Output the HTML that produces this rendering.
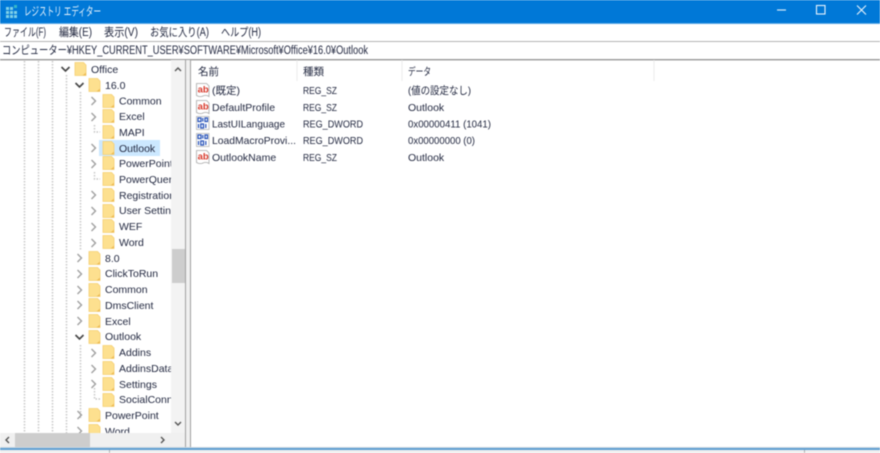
<!DOCTYPE html>
<html lang="ja"><head><meta charset="utf-8"><title>レジストリ エディター</title>
<style>
html,body{margin:0;padding:0;background:#fff;width:880px;height:453px;overflow:hidden}
svg{display:block;filter:blur(.4px)}
text{font-family:"Liberation Sans","Noto Sans CJK JP",sans-serif;font-size:10.5px;fill:#222840}
.m{font-size:11.5px}
.f{fill:#fde08f;stroke:#f5cf72;stroke-width:.8}
.c{fill:none;stroke:#a0a0a0;stroke-width:1.4}
.d{fill:none;stroke:#444;stroke-width:1.6}
.l{stroke:#c4c4c4;stroke-width:1.4;stroke-dasharray:1.5 1.5;fill:none}
</style></head><body>
<svg width="880" height="453" viewBox="0 0 880 453" xmlns="http://www.w3.org/2000/svg">
<defs>
<clipPath id="t"><rect x="0" y="60" width="171" height="373"/></clipPath>
<g id="fo"><path class="f" d="M.5 .5H9L11.5 3V13.5H.5Z"/><path d="M8 13.5L11.5 10.5V13.5Z" fill="#eebd55"/></g>
<g id="cr"><path class="c" d="M0 0L4 4L0 8"/></g>
<g id="ce"><path class="d" d="M0 0L4 4L8 0"/></g>
<g id="ab"><path d="M.5 .5H10.5L13 3V13.5Q10 11.500 7 13Q4 14.500 .5 12.500Z" fill="#fff" stroke="#a8a8a8" stroke-width=".8"/><text x="1.6" y="9.500" style="font-size:9.5px;font-weight:bold;fill:#d8392b">ab</text></g>
<g id="bn"><rect x=".5" y=".5" width="12.500" height="13" fill="#fff" stroke="#b4b4b4" stroke-width=".8"/><path d="M2 2H5V5.500H2ZM6.800 2V5.500M9 2H11.500V5.500H9ZM2.500 8V12M4.800 8H7.500V12H4.800ZM9.800 8V12" fill="none" stroke="#2450b8" stroke-width="1.2"/></g>
</defs>

<rect width="880" height="453" fill="#fff"/>
<!-- title bar -->
<rect width="880" height="23" fill="#0078d7"/>
<rect y="23" width="880" height="1" fill="#5aa8e6"/>
<g fill="#7fd0e8"><rect x="6" y="7" width="3" height="3"/><rect x="10" y="7" width="3" height="3"/><rect x="6" y="11" width="3" height="3"/><rect x="10" y="11" width="3" height="3"/><rect x="14" y="11" width="3" height="3"/><rect x="6" y="15" width="3" height="3"/><rect x="10" y="15" width="3" height="3"/><rect x="14" y="15" width="3" height="3"/><rect x="14" y="5" width="3" height="3" fill="#36b8c8"/></g>
<text x="24" y="15.500" style="font-size:12px;fill:#e8f3fc" textLength="77" lengthAdjust="spacingAndGlyphs">レジストリ エディター</text>
<path d="M777 10H786" stroke="#d5e9f9" stroke-width="1.2"/>
<rect x="816.5" y="5.5" width="8.5" height="8.5" fill="none" stroke="#e8f3fc" stroke-width="1.1"/>
<path d="M857 5.5L866 14.5M866 5.5L857 14.5" stroke="#e8f3fc" stroke-width="1.1"/>
<!-- menu -->
<text class="m" x="4" y="36" textLength="42" lengthAdjust="spacingAndGlyphs">ファイル(F)</text>
<text class="m" x="59" y="36" textLength="33" lengthAdjust="spacingAndGlyphs">編集(E)</text>
<text class="m" x="104" y="36" textLength="34" lengthAdjust="spacingAndGlyphs">表示(V)</text>
<text class="m" x="150" y="36" textLength="59" lengthAdjust="spacingAndGlyphs">お気に入り(A)</text>
<text class="m" x="221" y="36" textLength="40" lengthAdjust="spacingAndGlyphs">ヘルプ(H)</text>
<rect y="41" width="880" height="1" fill="#b4b4b4"/>
<!-- address -->
<text x="2" y="54" style="font-size:11.5px" textLength="366" lengthAdjust="spacingAndGlyphs">コンピューター¥HKEY_CURRENT_USER¥SOFTWARE¥Microsoft¥Office¥16.0¥Outlook</text>
<rect y="59" width="880" height="1.4" fill="#9a9a9a"/>

<!-- tree -->
<rect x="99" y="140" width="61" height="16" fill="#cce8ff"/>
<g class="l">
<path d="M24.500 61V433M38.500 61V433M52.500 61V433M66.500 75V433M80.500 92V250M80.500 345V418M94.500 125V132H100M94.500 172V179H100M94.500 388V399H100"/>
</g>
<g clip-path="url(#t)">
<use href="#ce" x="61.500" y="67"/><use href="#fo" x="74.500" y="62"/><text x="91" y="73">Office</text>
<use href="#ce" x="75.500" y="83"/><use href="#fo" x="88.500" y="78"/><text x="105" y="89">16.0</text>
<use href="#cr" x="91.500" y="97"/><use href="#fo" x="102.500" y="94"/><text x="119" y="104.500">Common</text>
<use href="#cr" x="91.500" y="113"/><use href="#fo" x="102.500" y="109"/><text x="119" y="120">Excel</text>
<use href="#fo" x="102.500" y="125"/><text x="119" y="136">MAPI</text>
<use href="#cr" x="91.500" y="144"/><use href="#fo" x="102.500" y="141"/><text x="119" y="152">Outlook</text>
<use href="#cr" x="91.500" y="160"/><use href="#fo" x="102.500" y="156"/><text x="119" y="167">PowerPoint</text>
<use href="#fo" x="102.500" y="172"/><text x="119" y="183">PowerQuery</text>
<use href="#cr" x="91.500" y="191"/><use href="#fo" x="102.500" y="188"/><text x="119" y="199">Registration</text>
<use href="#cr" x="91.500" y="207"/><use href="#fo" x="102.500" y="204"/><text x="119" y="214">User Settings</text>
<use href="#cr" x="91.500" y="223"/><use href="#fo" x="102.500" y="219"/><text x="119" y="230">WEF</text>
<use href="#cr" x="91.500" y="239"/><use href="#fo" x="102.500" y="235"/><text x="119" y="246">Word</text>
<use href="#cr" x="77.500" y="254"/><use href="#fo" x="88.500" y="251"/><text x="105" y="262">8.0</text>
<use href="#cr" x="77.500" y="270"/><use href="#fo" x="88.500" y="267"/><text x="105" y="277">ClickToRun</text>
<use href="#cr" x="77.500" y="286"/><use href="#fo" x="88.500" y="283"/><text x="105" y="293">Common</text>
<use href="#cr" x="77.500" y="301"/><use href="#fo" x="88.500" y="298"/><text x="105" y="309">DmsClient</text>
<use href="#cr" x="77.500" y="317"/><use href="#fo" x="88.500" y="314"/><text x="105" y="325">Excel</text>
<use href="#ce" x="75.500" y="335"/><use href="#fo" x="88.500" y="330"/><text x="105" y="340">Outlook</text>
<use href="#cr" x="91.500" y="349"/><use href="#fo" x="102.500" y="345"/><text x="119" y="356">Addins</text>
<use href="#cr" x="91.500" y="365"/><use href="#fo" x="102.500" y="361"/><text x="119" y="372">AddinsData</text>
<use href="#cr" x="91.500" y="380"/><use href="#fo" x="102.500" y="377"/><text x="119" y="388">Settings</text>
<use href="#fo" x="102.500" y="393"/><text x="119" y="403">SocialConn</text>
<use href="#cr" x="77.500" y="411"/><use href="#fo" x="88.500" y="408"/><text x="105" y="419">PowerPoint</text>
<use href="#cr" x="77.500" y="427"/><use href="#fo" x="88.500" y="424"/><text x="105" y="435">Word</text>
</g>
<!-- vertical scrollbar -->
<rect x="171" y="60" width="14" height="373" fill="#f3f3f3"/>
<rect x="172" y="249" width="13" height="34" fill="#cdcdcd"/>
<path d="M175 71L178 68L181 71" fill="none" stroke="#555" stroke-width="1.4"/>
<path d="M175 422L178 425L181 422" fill="none" stroke="#555" stroke-width="1.4"/>
<!-- horizontal scrollbar -->
<rect x="0" y="433" width="185" height="14" fill="#f0f0f0"/>
<rect x="15" y="433" width="75" height="14" fill="#cdcdcd"/>
<path d="M9 437L6 440L9 443" fill="none" stroke="#555" stroke-width="1.4"/>
<path d="M161 437L164 440L161 443" fill="none" stroke="#555" stroke-width="1.4"/>
<!-- splitter -->
<rect x="185" y="60" width="1" height="388" fill="#a0a0a0"/>
<rect x="186" y="60" width="4" height="388" fill="#f0f0f0"/>
<rect x="190" y="60" width="1" height="388" fill="#a0a0a0"/>

<!-- list header -->
<rect x="296.500" y="60" width="1" height="21" fill="#ececec"/>
<rect x="401.500" y="60" width="1" height="21" fill="#ececec"/>
<rect x="653.500" y="60" width="1" height="21" fill="#ececec"/>
<text x="198" y="75">名前</text>
<text x="303" y="75">種類</text>
<text x="408" y="75" textLength="23" lengthAdjust="spacingAndGlyphs">データ</text>
<!-- list rows -->
<use href="#ab" x="196" y="83"/><text x="212" y="94">(既定)</text><text x="303" y="94" textLength="34" lengthAdjust="spacingAndGlyphs">REG_SZ</text><text x="408" y="94" textLength="63" lengthAdjust="spacingAndGlyphs">(値の設定なし)</text>
<use href="#ab" x="196" y="100"/><text x="212" y="111">DefaultProfile</text><text x="303" y="111" textLength="34" lengthAdjust="spacingAndGlyphs">REG_SZ</text><text x="408" y="111">Outlook</text>
<use href="#bn" x="196" y="116"/><text x="212" y="127.500" textLength="73" lengthAdjust="spacingAndGlyphs">LastUILanguage</text><text x="303" y="127.500" textLength="60" lengthAdjust="spacingAndGlyphs">REG_DWORD</text><text x="408" y="127.500" textLength="83" lengthAdjust="spacingAndGlyphs">0x00000411 (1041)</text>
<use href="#bn" x="196" y="133"/><text x="212" y="144" textLength="84" lengthAdjust="spacingAndGlyphs">LoadMacroProvi...</text><text x="303" y="144" textLength="60" lengthAdjust="spacingAndGlyphs">REG_DWORD</text><text x="408" y="144" textLength="67" lengthAdjust="spacingAndGlyphs">0x00000000 (0)</text>
<use href="#ab" x="196" y="150"/><text x="212" y="161">OutlookName</text><text x="303" y="161" textLength="34" lengthAdjust="spacingAndGlyphs">REG_SZ</text><text x="408" y="161">Outlook</text>

<!-- status -->
<rect y="447" width="880" height="1" fill="#c8d6e0"/>
<rect y="448" width="880" height="2" fill="#5f9fd2"/>
<rect y="450" width="880" height="3" fill="#f0f0f0"/>
<rect x="109" y="450" width="1" height="3" fill="#b0b0b0"/>
<rect x="804" y="450" width="1" height="3" fill="#b0b0b0"/>
</svg>
</body></html>
